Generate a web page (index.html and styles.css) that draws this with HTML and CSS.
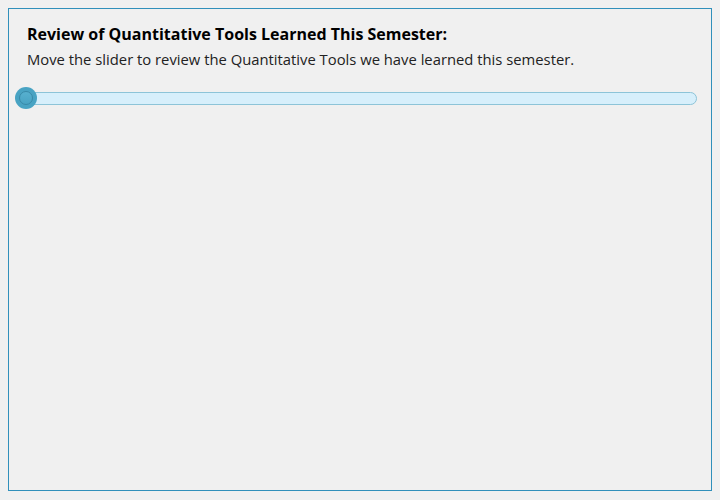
FILE: index.html
```html
<!DOCTYPE html>
<html>
<head>
<meta charset="utf-8">
<link rel="stylesheet" href="styles.css">
</head>
<body>
<div class="frame">
  <h1 class="title">Review of Quantitative Tools Learned This Semester:</h1>
  <p class="subtitle">Move the slider to review the Quantitative Tools we have learned this semester.</p>
  <div class="slider">
    <div class="track"></div>
    <div class="thumb"><div class="thumb-inner"></div></div>
  </div>
</div>
</body>
</html>
```
FILE: styles.css
```css
html, body {
  background: #f0f0f0;
}
body {
  margin: 8px;
  font-family: "Open Sans", "Noto Sans", sans-serif;
  color: #111;
}
.frame {
  box-sizing: border-box;
  height: 483px;
  border: 1px solid #3190bb;
  padding: 14px 14px 0 18px;
}
.title {
  margin: 0;
  font-size: 16px;
  line-height: 22px;
  font-weight: 700;
  color: #000;
}
.subtitle {
  margin: 4px 0 0 0;
  font-size: 14.8px;
  line-height: 20px;
  color: #222;
}
.slider {
  position: relative;
  margin: 18px 0 0 -11px;
  height: 22px;
  display: flex;
  align-items: center;
}
.track {
  flex: 1;
  height: 11px;
  border: 1.5px solid #8dc4d8;
  border-radius: 7px;
  background: #d7effb;
}
.thumb {
  position: absolute;
  left: -1px;
  top: 0;
  width: 22px;
  height: 22px;
  box-sizing: border-box;
  border-radius: 50%;
  background: #48a3c3;
  display: flex;
  align-items: center;
  justify-content: center;
}
.thumb-inner {
  width: 14px;
  height: 14px;
  box-sizing: border-box;
  border-radius: 50%;
  border: 1px solid #3889a8;
  background: linear-gradient(#57b0cf, #48a3c3);
}
```
